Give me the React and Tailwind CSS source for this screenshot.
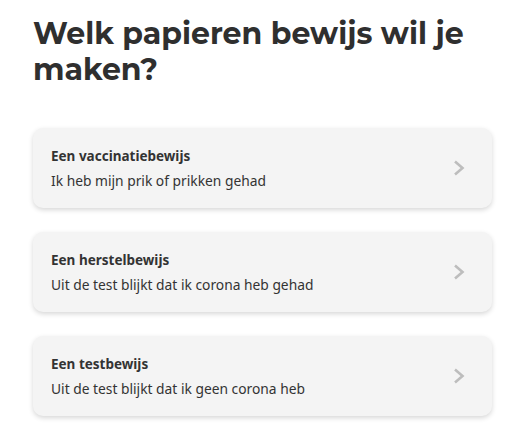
import React from 'react';

const options = [
    { title: 'Een vaccinatiebewijs', text: 'Ik heb mijn prik of prikken gehad' },
    { title: 'Een herstelbewijs', text: 'Uit de test blijkt dat ik corona heb gehad' },
    { title: 'Een testbewijs', text: 'Uit de test blijkt dat ik geen corona heb' },
];

const Chevron = () => (
    <svg width="12" height="16" viewBox="0 0 12 16" fill="none" className="shrink-0">
        <path d="M2 1.5 L9.5 8 L2 14.5" stroke="#bdbdbd" strokeWidth="2.6" />
    </svg>
);

const OptionCard = ({ title, text }) => (
    <button
        type="button"
        className="w-full h-[80px] flex items-center justify-between rounded-[10px] bg-[#f4f4f4] pl-[18px] pr-[27px] text-left shadow-[0_2px_5px_rgba(0,0,0,0.16)]"
    >
        <div className="pt-[1px]">
            <div className="text-[13.5px] leading-[20px] font-bold text-[#333]">{title}</div>
            <div className="mt-[5px] text-[13.8px] leading-[20px] text-[#333]">{text}</div>
        </div>
        <Chevron />
    </button>
);

export default function App() {
    return (
        <div className="min-h-screen bg-white pl-[33px] pr-[31px] pt-[16px] font-['Noto_Sans',sans-serif]">
            <h1 className="font-['Montserrat','Open_Sans',sans-serif] text-[30px] leading-[36px] font-bold text-[#2f2f2f]">
                Welk papieren bewijs wil je maken?
            </h1>
            <div className="mt-[40px] flex flex-col gap-[24px]">
                {options.map((o) => (
                    <OptionCard key={o.title} title={o.title} text={o.text} />
                ))}
            </div>
        </div>
    );
}
